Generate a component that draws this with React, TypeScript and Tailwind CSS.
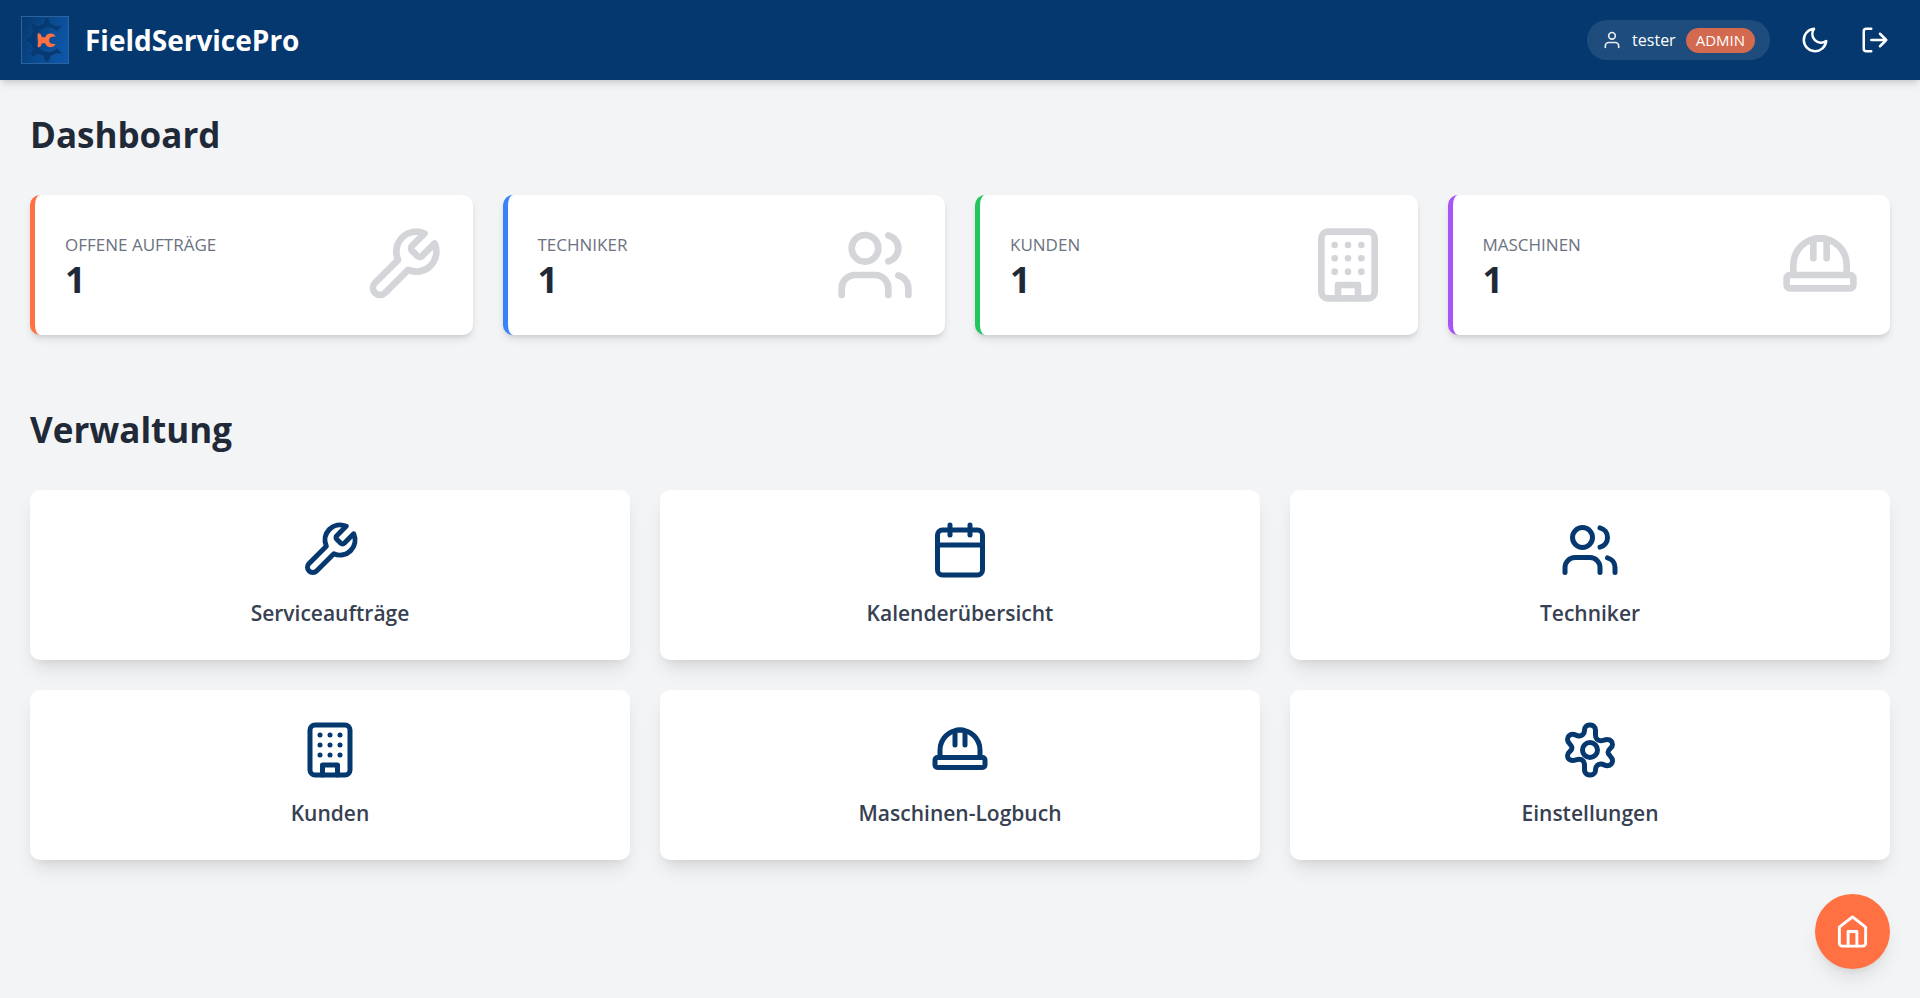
import type { ReactNode } from "react";

type IconProps = { className?: string };

function Icon({ className, children }: { className?: string; children: ReactNode }) {
  return (
    <svg
      viewBox="0 0 24 24"
      fill="none"
      stroke="currentColor"
      strokeWidth={2}
      strokeLinecap="round"
      strokeLinejoin="round"
      aria-hidden="true"
      className={className}
    >
      {children}
    </svg>
  );
}

const Wrench = ({ className }: IconProps) => (
  <Icon className={className}>
    <path d="M14.7 6.3a1 1 0 0 0 0 1.4l1.6 1.6a1 1 0 0 0 1.4 0l3.77-3.77a6 6 0 0 1-7.94 7.94l-6.91 6.91a2.12 2.12 0 0 1-3-3l6.91-6.91a6 6 0 0 1 7.94-7.94l-3.76 3.76z" />
  </Icon>
);

const Users = ({ className }: IconProps) => (
  <Icon className={className}>
    <path d="M16 21v-2a4 4 0 0 0-4-4H6a4 4 0 0 0-4 4v2" />
    <circle cx="9" cy="7" r="4" />
    <path d="M22 21v-2a4 4 0 0 0-3-3.87" />
    <path d="M16 3.13a4 4 0 0 1 0 7.75" />
  </Icon>
);

const Building = ({ className }: IconProps) => (
  <Icon className={className}>
    <rect x="4" y="2" width="16" height="20" rx="2" />
    <path d="M9 22v-4h6v4" />
    <path d="M8 6h.01M12 6h.01M16 6h.01M8 10h.01M12 10h.01M16 10h.01M8 14h.01M12 14h.01M16 14h.01" />
  </Icon>
);

const HardHat = ({ className }: IconProps) => (
  <Icon className={className}>
    <path d="M2 18a1 1 0 0 0 1 1h18a1 1 0 0 0 1-1v-2a1 1 0 0 0-1-1H3a1 1 0 0 0-1 1v2z" />
    <path d="M10 10V5a1 1 0 0 1 1-1h2a1 1 0 0 1 1 1v5" />
    <path d="M4 15v-3a8 8 0 0 1 16 0v3" />
  </Icon>
);

const Calendar = ({ className }: IconProps) => (
  <Icon className={className}>
    <rect x="3" y="4" width="18" height="18" rx="2" />
    <path d="M16 2v4M8 2v4M3 10h18" />
  </Icon>
);

const Settings = ({ className }: IconProps) => (
  <Icon className={className}>
    <path d="M11.78 2A2 2 0 0 0 9.78 4V4.3C9.78 5.6 8.7 6.5 7.5 6.4C6.6 6.3 6 5.7 5.1 5.7C3.9 5.7 3 6.6 3 7.8C3 9.3 4.8 9.9 4.8 11.1C4.8 12.5 3 12.6 3 14.2C3 15.4 3.9 16.2 5.1 16.2C6.2 16.2 6.6 15.7 7.7 15.7C9 15.7 9.8 16.6 9.8 18V20A2 2 0 0 0 11.78 22H12.22A2 2 0 0 0 14.22 20V19.7C14.22 18.4 15.3 17.5 16.5 17.6C17.4 17.7 18 18.3 18.9 18.3C20.1 18.3 21 17.4 21 16.2C21 14.7 19.2 14.1 19.2 12.9C19.2 11.5 21 11.4 21 9.8C21 8.6 20.1 7.8 18.9 7.8C17.8 7.8 17.4 8.3 16.3 8.3C15 8.3 14.2 7.4 14.2 6V4A2 2 0 0 0 12.22 2Z" />
    <circle cx="12" cy="12" r="3" />
  </Icon>
);

const User = ({ className }: IconProps) => (
  <Icon className={className}>
    <path d="M20 21v-2a4 4 0 0 0-4-4H8a4 4 0 0 0-4 4v2" />
    <circle cx="12" cy="7" r="4" />
  </Icon>
);

const Moon = ({ className }: IconProps) => (
  <Icon className={className}>
    <path d="M21 12.79A9 9 0 1 1 11.21 3 7 7 0 0 0 21 12.79z" />
  </Icon>
);

const LogOut = ({ className }: IconProps) => (
  <Icon className={className}>
    <path d="M9 21H5a2 2 0 0 1-2-2V5a2 2 0 0 1 2-2h4" />
    <path d="M16 17l5-5-5-5M21 12H9" />
  </Icon>
);

const Home = ({ className }: IconProps) => (
  <Icon className={className}>
    <path d="M3 9l9-7 9 7v11a2 2 0 0 1-2 2H5a2 2 0 0 1-2-2z" />
    <path d="M9 22V12h6v10" />
  </Icon>
);

function Logo() {
  return (
    <svg viewBox="0 0 50 50" className="size-[50px]" aria-hidden="true">
      <defs>
        <linearGradient id="logo-bg" x1="0" y1="0" x2="1" y2="0.4">
          <stop offset="0" stopColor="#05396f" />
          <stop offset="1" stopColor="#0d55a6" />
        </linearGradient>
      </defs>
      <rect x="1.5" y="1.5" width="47" height="47" fill="url(#logo-bg)" stroke="#2d629c" />
      <path
        d="M25.2 2.7H28.8L31 8.7Q34 9.4 36.5 11.2L42.8 10.3L37 16.2A12 12 0 1 0 37 33.2L42.8 39.1L36.5 38.2Q34 40 31 40.7L28.8 46.7H25.2L23 40.7Q20.4 40.2 18.2 39.2L13 41.8L9.9 38.7L12.5 33.5Q11.2 31.2 10.7 28.7L5.5 26.7V22.7L10.7 20.7Q11.2 18.2 12.5 15.9L9.9 10.7L13 7.6L18.2 10.2Q20.4 9.2 23 8.7Z"
        fill="#053a74"
        stroke="#1c5590"
        strokeWidth="0.5"
        strokeLinejoin="round"
      />
      <path
        d="M17.8 18L20.5 19L22 22.3H25.2C26.2 19.3 28.5 18 31.5 18.5C33.5 18.8 35 20 35.5 21.5L31.5 21.7L29.3 23.6V26.9L31.5 28.8L35.5 29C35 30.6 33.5 31.8 31.5 32.1C28.5 32.5 26.2 31.2 25.2 28.3H22L20.5 31.5L17.8 32.5C17.3 30 18.5 27.5 18 25.3C17.8 23 17.2 20.5 17.8 18Z"
        fill="#ff7043"
      />
    </svg>
  );
}

const stats = [
  { label: "Offene Aufträge", value: 1, icon: Wrench, border: "border-[#ff7043]" },
  { label: "Techniker", value: 1, icon: Users, border: "border-[#3b82f6]" },
  { label: "Kunden", value: 1, icon: Building, border: "border-[#22c55e]" },
  { label: "Maschinen", value: 1, icon: HardHat, border: "border-[#a855f7]" },
];

const sections = [
  { label: "Serviceaufträge", icon: Wrench },
  { label: "Kalenderübersicht", icon: Calendar },
  { label: "Techniker", icon: Users },
  { label: "Kunden", icon: Building },
  { label: "Maschinen-Logbuch", icon: HardHat },
  { label: "Einstellungen", icon: Settings },
];

export default function App() {
  return (
    <div className="min-h-screen bg-[#f3f4f6] font-['Segoe_UI','Open_Sans',sans-serif] text-[#1f2937]">
      <header className="flex h-20 items-center justify-between bg-[#05386f] px-5 text-white shadow-[0_5px_8px_-1px_rgba(0,0,0,0.1),0_3px_5px_-2px_rgba(0,0,0,0.1)]">
        <div className="flex items-center gap-[15px]">
          <Logo />
          <span className="text-[28px] leading-10 font-bold">FieldServicePro</span>
        </div>
        <div className="flex items-center gap-5">
          <div className="flex h-10 items-center gap-2.5 rounded-full bg-white/10 px-[15px]">
            <User className="size-5 opacity-90" />
            <span className="text-[16px] leading-6">tester</span>
            <span className="rounded-full bg-[#d3694e] px-2.5 text-[15px] leading-[25px]">ADMIN</span>
          </div>
          <div className="flex gap-2.5">
            <button type="button" aria-label="Dunkelmodus" className="rounded-full p-2.5">
              <Moon className="size-[30px]" />
            </button>
            <button type="button" aria-label="Abmelden" className="rounded-full p-2.5">
              <LogOut className="size-[30px]" />
            </button>
          </div>
        </div>
      </header>

      <main className="p-[30px]">
        <h1 className="mb-9 text-[35px] leading-[49px] font-bold">Dashboard</h1>
        <div className="grid grid-cols-4 gap-[30px]">
          {stats.map(({ label, value, icon: StatIcon, border }) => (
            <section
              key={label}
              className={`flex items-center justify-between rounded-[10px] border-l-[5px] bg-white p-[30px] shadow-[0_5px_8px_-1px_rgba(0,0,0,0.1),0_3px_5px_-2px_rgba(0,0,0,0.1)] ${border}`}
            >
              <div className="pt-1">
                <p className="text-[17px] leading-[25px] text-[#6b7280] uppercase">{label}</p>
                <p className="text-[36px] leading-[45px] font-bold">{value}</p>
              </div>
              <StatIcon className="size-20 text-[#d3d5d8]" />
            </section>
          ))}
        </div>

        <h2 className="mt-[70px] mb-9 text-[35px] leading-[49px] font-bold">Verwaltung</h2>
        <nav className="grid grid-cols-3 gap-[30px]">
          {sections.map(({ label, icon: SectionIcon }) => (
            <button
              key={label}
              type="button"
              className="flex flex-col items-center gap-4 rounded-[10px] bg-white p-[30px] shadow-[0_12px_19px_-4px_rgba(0,0,0,0.1),0_5px_8px_-5px_rgba(0,0,0,0.1)]"
            >
              <SectionIcon className="size-[60px] text-[#05386f]" />
              <span className="text-[21px] leading-[34px] font-semibold text-[#374151]">{label}</span>
            </button>
          ))}
        </nav>
      </main>

      <button
        type="button"
        aria-label="Startseite"
        className="fixed right-[30px] bottom-[29px] rounded-full bg-[#ff7043] p-5 text-white shadow-[0_12px_19px_-4px_rgba(0,0,0,0.1),0_5px_8px_-5px_rgba(0,0,0,0.1)]"
      >
        <Home className="size-[35px]" />
      </button>
    </div>
  );
}
